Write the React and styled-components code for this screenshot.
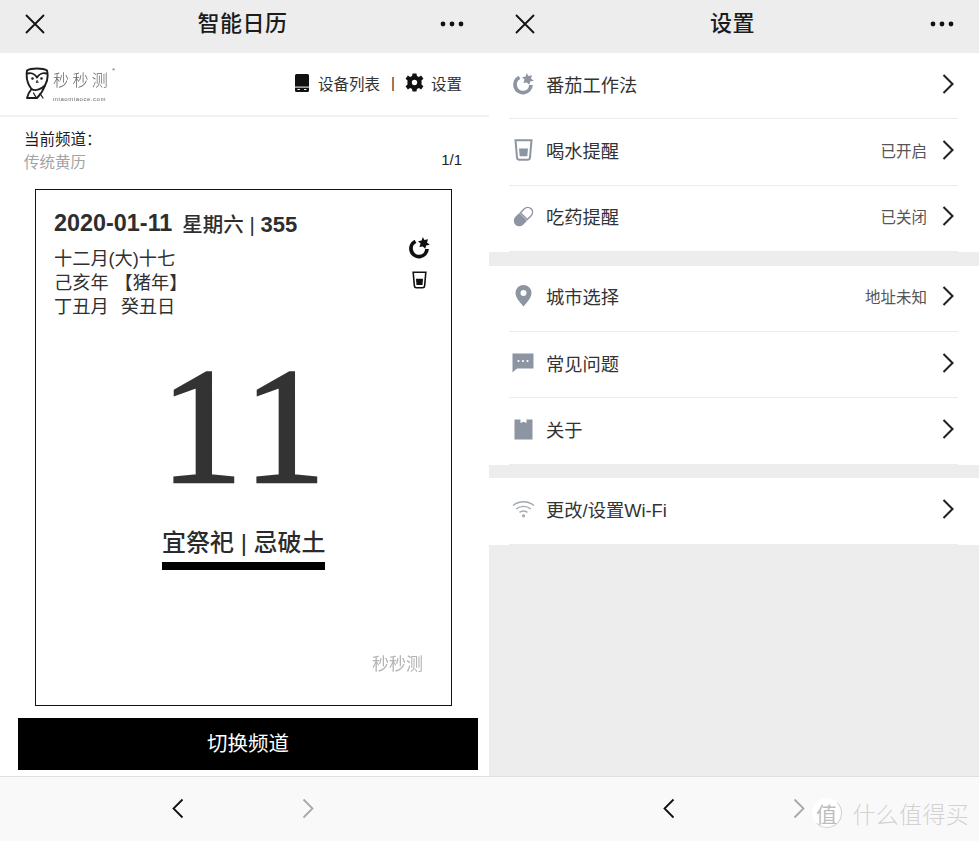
import styled, { createGlobalStyle } from "styled-components";

const Global = createGlobalStyle`
    html, body { margin: 0; padding: 0; background: #fff; }
    body { font-family: "Liberation Sans", "Noto Sans CJK SC", sans-serif; color: #333; }
`;

const Page = styled.div`
    position: relative;
    display: grid;
    grid-template-columns: 489px 490px;
    width: 979px;
    height: 841px;
    overflow: hidden;
`;

const Pane = styled.div`
    display: flex;
    flex-direction: column;
    height: 841px;
    background: ${props => props.bg || '#fff'};
`;

const NavBar = styled.div`
    display: flex;
    align-items: center;
    justify-content: space-between;
    flex: 0 0 53px;
    box-sizing: border-box;
    padding: 0 25px 5px ${props => props.$left || 25}px;
    background: #ededed;
`;

const NavTitle = styled.div`
    font-size: 22px;
    line-height: 26px;
    font-weight: 500;
    color: #1c1c1c;
    letter-spacing: 0.5px;
`;

const BrandBar = styled.div`
    display: flex;
    align-items: center;
    justify-content: space-between;
    flex: 0 0 64px;
    box-sizing: border-box;
    padding: 0 27px 3px 25px;
    border-bottom: 2px solid #f1f1f1;
`;

const Logo = styled.div`
    display: flex;
    align-items: center;
    gap: 4px;
`;

const LogoText = styled.div`
    position: relative;
    display: flex;
    flex-direction: column;
    gap: 4px;
    padding-top: 8px;
    will-change: transform;
`;

const LogoName = styled.div`
    font-size: 16px;
    line-height: 20px;
    letter-spacing: 3.4px;
    color: #666;
    font-weight: 300;
`;

const LogoDomain = styled.div`
    font-size: 6px;
    line-height: 8px;
    letter-spacing: 0.55px;
    color: #666;
`;

const LogoMark = styled.span`
    position: absolute;
    top: 3px;
    right: -4px;
    font-size: 8px;
    color: #777;
`;

const Links = styled.div`
    display: flex;
    align-items: center;
    font-size: 15.5px;
    color: #333;
`;

const LinkLabel = styled.span`
    margin-left: ${props => props.$gap || 7}px;
`;

const Sep = styled.span`
    margin: 0 10px 0 11px;
    font-size: 15px;
`;

const Channel = styled.div`
    display: flex;
    justify-content: space-between;
    align-items: flex-end;
    flex: 0 0 72px;
    box-sizing: border-box;
    padding: 10px 27px 15px 24px;
`;

const ChannelName = styled.div`
    font-size: 15.5px;
    line-height: 23px;
    color: #1f1f1f;
`;

const ChannelValue = styled.div`
    font-size: 15.5px;
    line-height: 23px;
    color: #a3a3a3;
`;

const Count = styled.div`
    font-size: 15px;
    line-height: 22px;
    color: #222;
    margin-bottom: 3px;
`;

const CardWrap = styled.div`
    flex: 0 0 517px;
    padding-left: 35px;
`;

const Card = styled.div`
    position: relative;
    box-sizing: border-box;
    width: 417px;
    height: 517px;
    padding: 19px 18px 0 18px;
    border: 1.5px solid #111;
`;

const DateLine = styled.div`
    display: flex;
    align-items: center;
    height: 28px;
    font-size: 23.4px;
    font-weight: 700;
    color: #2e2e2e;
`;

const Week = styled.span`
    margin-left: 10px;
    font-size: 20.5px;
    font-weight: 500;
`;

const WeekNumber = styled.b`
    font-size: 22px;
`;

const Lunar = styled.div`
    margin-top: 10px;
    font-size: 18.2px;
    line-height: 24px;
    word-spacing: 1px;
    color: #303030;
    white-space: pre;
`;

const CardIcons = styled.div`
    position: absolute;
    top: 47px;
    right: 21px;
    display: flex;
    flex-direction: column;
    align-items: center;
    gap: 11px;
`;

const BigDay = styled.div`
    margin-top: 22px;
    margin-left: 5px;
    text-align: center;
    font-family: "Liberation Serif", serif;
    font-size: 166px;
    line-height: 170px;
    letter-spacing: 6px;
    color: #333;
    -webkit-text-stroke: 2.4px #333;
`;

const Luck = styled.div`
    width: 163px;
    margin: 16px auto 0;
    text-align: center;
    font-size: 24px;
    line-height: 32px;
    font-weight: 500;
    color: #2b2b2b;
    white-space: nowrap;
    border-bottom: 8px solid #000;
    padding-bottom: 3px;
`;

const Stamp = styled.div`
    position: absolute;
    right: 28px;
    bottom: 30px;
    font-size: 17px;
    color: #b4b4b4;
    will-change: transform;
`;

const SwitchButton = styled.div`
    display: flex;
    align-items: center;
    justify-content: center;
    flex: 0 0 52px;
    box-sizing: border-box;
    margin: 12px 11px 6px 18px;
    padding-bottom: 4px;
    background: #000;
    color: #fff;
    font-size: 20.5px;
`;

const BottomBar = styled.div`
    display: flex;
    align-items: center;
    justify-content: center;
    gap: 118px;
    flex: 0 0 65px;
    box-sizing: border-box;
    margin-top: auto;
    padding: 0 ${props => props.$shift}px 2px 0;
    background: #f9f9fa;
    border-top: 1px solid #dfdfdf;
`;

const Group = styled.div`
    background: #fff;
    margin-bottom: ${props => props.$last ? 0 : 13.4}px;
`;

const Row = styled.div`
    position: relative;
    display: flex;
    align-items: center;
    height: 66.4px;
    box-sizing: border-box;
    margin-left: 20px;
    margin-right: 21px;
    padding: 0 4px 4px 0;
    border-bottom: 1.5px solid #ececec;
    font-size: 18.3px;
    color: #333;
`;

const RowIcon = styled.div`
    display: flex;
    align-items: center;
    justify-content: center;
    width: 28px;
    margin-right: 9px;
`;

const RowLabel = styled.div`
    flex: 1;
`;

const RowValue = styled.div`
    margin-right: 15px;
    font-size: 15.5px;
    color: #555;
`;

const Watermark = styled.div`
    position: absolute;
    right: 10px;
    bottom: 11px;
    display: flex;
    align-items: center;
    gap: 11px;
`;

const MarkCircle = styled.div`
    display: flex;
    align-items: center;
    justify-content: center;
    box-sizing: border-box;
    width: 30px;
    height: 30px;
    border-radius: 50%;
    background: rgba(255, 255, 255, 0.9);
    border: 1.5px solid #cfcfcf;
    border-left-color: transparent;
    border-top-color: transparent;
    font-size: 21px;
    color: #bdbdbd;
`;

const MarkText = styled.div`
    font-size: 23px;
    letter-spacing: 0.3px;
    color: #d2d2d2;
    font-weight: 300;
`;

const Close = () => (
    <svg width="20" height="20" viewBox="0 0 20 20" fill="none" stroke="#111" strokeWidth="1.8">
        <path d="M1 1 L19 19 M19 1 L1 19" />
    </svg>
);

const More = () => (
    <svg width="24" height="6" viewBox="0 0 24 6" fill="#111">
        <circle cx="3" cy="3" r="2.4" />
        <circle cx="12" cy="3" r="2.4" />
        <circle cx="21" cy="3" r="2.4" />
    </svg>
);

const Chevron = ({ dir = 'right', color = '#222', w = 12, h = 20, sw = 2.1 }) => (
    <svg width={w} height={h} viewBox="0 0 12 20" fill="none" stroke={color} strokeWidth={sw}>
        <path d={dir === 'right' ? "M1.5 1 L10.5 10 L1.5 19" : "M10.5 1 L1.5 10 L10.5 19"} />
    </svg>
);

const Owl = () => (
    <svg width="24" height="32" viewBox="0 0 24 32" fill="none" stroke="#1d1d1d" strokeWidth="1.9" strokeLinejoin="round" strokeLinecap="round">
        <path d="M2 3.5 C6 0.8 18 0.8 22 3.5 C23.4 9 22.5 14 20 18.5 C18 24 15 28 12 31 L2 31 C3 27 4.5 24.5 6.5 22 C2.5 17 1 10 2 3.5 Z" />
        <path d="M2.5 6.5 C6 5.5 10 7 12 10.5 C14 7 18 5.5 21.5 6.5" />
        <path d="M6.5 22 C10 24.5 16 22.5 20 18.5" />
        <path d="M15 26.5 L18 31 M8.5 26 L11.5 31" strokeWidth="1.3" />
        <circle cx="7.5" cy="11.5" r="1.3" fill="#1d1d1d" stroke="none" />
        <circle cx="16.5" cy="11.5" r="1.3" fill="#1d1d1d" stroke="none" />
        <path d="M12 13.5 L11 15.5 L13 15.5 Z" fill="#1d1d1d" strokeWidth="0.6" />
    </svg>
);

const Device = () => (
    <svg width="14" height="18" viewBox="0 0 14 18">
        <path d="M1.5 0 H12.5 A1.5 1.5 0 0 1 14 1.5 V16.5 A1.5 1.5 0 0 1 12.5 18 H1.5 A1.5 1.5 0 0 1 0 16.5 V1.5 A1.5 1.5 0 0 1 1.5 0 Z" fill="#111" />
        <rect x="0" y="12.6" width="14" height="1" fill="#fff" />
        <rect x="2.5" y="15" width="2.4" height="1" fill="#fff" />
        <rect x="9" y="15" width="2.4" height="1" fill="#fff" />
    </svg>
);

const Gear = () => (
    <svg width="19" height="19" viewBox="0 0 20 20">
        <path
            fill="#111"
            fillRule="evenodd"
            d="M8 0.5 H12 L12.6 3.2 L14.6 4.1 L17 2.7 L19.4 6 L17.3 7.8 L17.5 10 L17.3 12.2 L19.4 14 L17 17.3 L14.6 15.9 L12.6 16.8 L12 19.5 H8 L7.4 16.8 L5.4 15.9 L3 17.3 L0.6 14 L2.7 12.2 L2.5 10 L2.7 7.8 L0.6 6 L3 2.7 L5.4 4.1 L7.4 3.2 Z M10 7.2 A2.8 2.8 0 1 0 10 12.8 A2.8 2.8 0 1 0 10 7.2 Z"
        />
    </svg>
);

const Tomato = ({ color, size = 22, sw = 3.8 }) => (
    <svg width={size} height={size} viewBox="0 0 22 22" fill="none">
        <path d="M7.5 4.4 A8 8 0 1 0 19 12" stroke={color} strokeWidth={sw} />
        <path d="M14.8 0 L16.4 3 L20 2.2 L19 5.6 L21.8 7.8 L18.2 8.6 L17.2 11.8 L14.8 9.4 L11.4 10 L12.6 6.6 L10 4.2 L13.6 3.6 Z" fill={color} />
    </svg>
);

const Cup = ({ color, w = 19, h = 22, sw = 2 }) => (
    <svg width={w} height={h} viewBox="0 0 19 22" fill="none">
        <path d="M1.5 1.2 H17.5 L16 18.5 Q15.8 20.8 13.5 20.8 H5.5 Q3.2 20.8 3 18.5 Z" stroke={color} strokeWidth={sw} />
        <path d="M5 9.5 H14 L13.3 17.2 H5.7 Z" fill={color} />
    </svg>
);

const Pill = () => (
    <svg width="25" height="25" viewBox="0 0 25 25">
        <g transform="rotate(-45 12.5 12.5)">
            <path d="M12 7 H6.5 A5.5 5.5 0 0 0 6.5 18 H12 Z" fill="#8e95a2" />
            <path d="M13 7.7 H18.5 A4.8 4.8 0 0 1 18.5 17.3 H13 Z" fill="none" stroke="#8e95a2" strokeWidth="1.4" />
        </g>
    </svg>
);

const Pin = () => (
    <svg width="17" height="22" viewBox="0 0 17 22">
        <path
            fill="#8e95a2"
            fillRule="evenodd"
            d="M8.5 0 A8 8 0 0 1 16.5 8 C16.5 13 11 18.5 8.5 21.5 C6 18.5 0.5 13 0.5 8 A8 8 0 0 1 8.5 0 Z M8.5 5 A3 3 0 1 0 8.5 11 A3 3 0 1 0 8.5 5 Z"
        />
    </svg>
);

const Chat = () => (
    <svg width="22" height="20" viewBox="0 0 22 20">
        <path d="M0.5 0.5 H21.5 V15.5 H5 L0.5 19.5 Z" fill="#8e95a2" />
        <circle cx="6.5" cy="8" r="1.1" fill="#fff" />
        <circle cx="11" cy="8" r="1.1" fill="#fff" />
        <circle cx="15.5" cy="8" r="1.1" fill="#fff" />
    </svg>
);

const Box = () => (
    <svg width="19" height="21" viewBox="0 0 19 21">
        <path d="M0.5 0.5 H6.5 V4 L9.5 2.8 L12.5 4 V0.5 H18.5 V20.5 H0.5 Z" fill="#8e95a2" />
    </svg>
);

const Wifi = () => (
    <svg width="23" height="18" viewBox="0 0 23 18" fill="none" stroke="#a2a8b2" strokeWidth="1.4">
        <path d="M1 5.5 C7 0.5 16 0.5 22 5.5" />
        <path d="M4.2 9 C8.5 5.5 14.5 5.5 18.8 9" />
        <path d="M7.5 12.4 C10 10.6 13 10.6 15.5 12.4" />
        <circle cx="11.5" cy="15.8" r="1.6" fill="#a2a8b2" stroke="none" />
    </svg>
);

const SettingRow = ({ icon, label, value }) => (
    <Row>
        <RowIcon>{icon}</RowIcon>
        <RowLabel>{label}</RowLabel>
        {value && <RowValue>{value}</RowValue>}
        <Chevron />
    </Row>
);

const Pager = ({ shift }) => (
    <BottomBar $shift={shift}>
        <Chevron dir="left" color="#111" h={23} sw={1.8} />
        <Chevron color="#a8a8a8" h={23} sw={1.8} />
    </BottomBar>
);

export default function App() {
    return (
        <Page>
            <Global />
            <Pane>
                <NavBar>
                    <Close />
                    <NavTitle>智能日历</NavTitle>
                    <More />
                </NavBar>
                <BrandBar>
                    <Logo>
                        <Owl />
                        <LogoText>
                            <LogoName>秒秒测</LogoName>
                            <LogoDomain>miaomiaoce.com</LogoDomain>
                            <LogoMark>*</LogoMark>
                        </LogoText>
                    </Logo>
                    <Links>
                        <Device />
                        <LinkLabel $gap={9}>设备列表</LinkLabel>
                        <Sep>|</Sep>
                        <Gear />
                        <LinkLabel>设置</LinkLabel>
                    </Links>
                </BrandBar>
                <Channel>
                    <div>
                        <ChannelName>当前频道：</ChannelName>
                        <ChannelValue>传统黄历</ChannelValue>
                    </div>
                    <Count>1/1</Count>
                </Channel>
                <CardWrap>
                    <Card>
                        <DateLine>
                            2020-01-11<Week>星期六 | <WeekNumber>355</WeekNumber></Week>
                        </DateLine>
                        <Lunar>
                            十二月(大)十七{"\n"}己亥年 【猪年】{"\n"}丁丑月  癸丑日
                        </Lunar>
                        <CardIcons>
                            <Tomato color="#111" />
                            <Cup color="#111" w={15} h={20} />
                        </CardIcons>
                        <BigDay>11</BigDay>
                        <Luck>宜祭祀 | 忌破土</Luck>
                        <Stamp>秒秒测</Stamp>
                    </Card>
                </CardWrap>
                <SwitchButton>切换频道</SwitchButton>
                <Pager shift={3} />
            </Pane>
            <Pane bg="#ededed">
                <NavBar $left={26}>
                    <Close />
                    <NavTitle>设置</NavTitle>
                    <More />
                </NavBar>
                <Group>
                    <SettingRow icon={<Tomato color="#8e95a2" />} label="番茄工作法" />
                    <SettingRow icon={<Cup color="#8e95a2" />} label="喝水提醒" value="已开启" />
                    <SettingRow icon={<Pill />} label="吃药提醒" value="已关闭" />
                </Group>
                <Group>
                    <SettingRow icon={<Pin />} label="城市选择" value="地址未知" />
                    <SettingRow icon={<Chat />} label="常见问题" />
                    <SettingRow icon={<Box />} label="关于" />
                </Group>
                <Group $last>
                    <SettingRow icon={<Wifi />} label="更改/设置Wi-Fi" />
                </Group>
                <Pager shift={1} />
            </Pane>
            <Watermark>
                <MarkCircle>值</MarkCircle>
                <MarkText>什么值得买</MarkText>
            </Watermark>
        </Page>
    );
}
